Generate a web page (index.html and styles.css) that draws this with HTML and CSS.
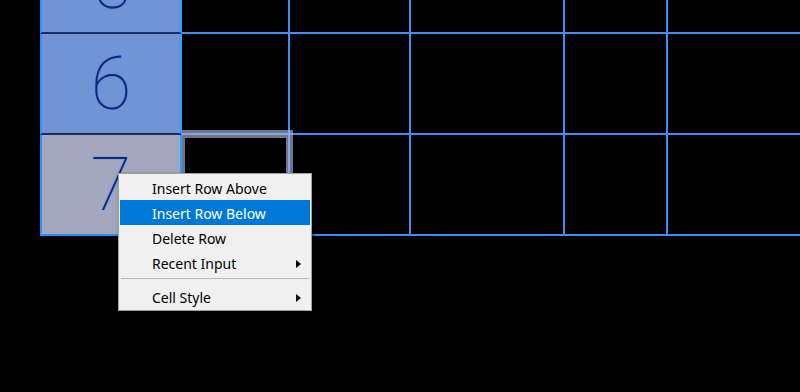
FILE: index.html
```html
<!DOCTYPE html>
<html lang="en">
<head>
    <meta charset="UTF-8">
    <meta name="viewport" content="width=device-width, initial-scale=1.0">
    <title>Row menu</title>
    <link rel="stylesheet" href="styles.css">
</head>
<body>
    <div class="sheet">
        <div class="head">5</div>
        <div class="cell"></div>
        <div class="cell"></div>
        <div class="cell"></div>
        <div class="cell"></div>
        <div class="cell last"></div>

        <div class="head">6</div>
        <div class="cell"></div>
        <div class="cell"></div>
        <div class="cell"></div>
        <div class="cell"></div>
        <div class="cell last"></div>

        <div class="head head-active">7</div>
        <div class="cell"></div>
        <div class="cell"></div>
        <div class="cell"></div>
        <div class="cell"></div>
        <div class="cell last"></div>
    </div>

    <!-- focus frame of the current cell -->
    <div class="focus"></div>

    <div class="menu">
        <div class="item">Insert Row Above</div>
        <div class="item selected">Insert Row Below</div>
        <div class="item">Delete Row</div>
        <div class="item">Recent Input <span class="arrow"></span></div>
        <div class="sep"></div>
        <div class="item">Cell Style <span class="arrow"></span></div>
    </div>
</body>
</html>
```

FILE: styles.css
```css
body {
    margin: 0;
    background: #000;
    height: 392px;
    overflow: hidden;
    position: relative;
}

.sheet {
    display: grid;
    grid-template-columns: 142px 108px 121px 154px 103px 1fr;
    grid-auto-rows: 101px;
    margin-left: 40px;
    margin-top: -67px;
}

.cell {
    border-right: 2px solid #3c90f6;
    border-bottom: 2px solid #3c90f6;
}

.cell.last {
    border-right: none;
}

.head {
    background: #7394d4;
    border-left: 2px solid #2994fb;
    border-right: 2px solid #2aa0ff;
    border-bottom: 2px solid #1b2c6a;
    text-align: center;
    font-family: Roboto, Lato, sans-serif;
    font-weight: 100;
    font-size: 74px;
    line-height: 74px;
    padding-top: 13px;
    color: #10286e;
    text-shadow: 0 0 2px #3f80ff;
}

.head-active {
    background: #a3a8be;
    border-bottom-color: #2a8cf5;
}

.focus {
    position: absolute;
    left: 182px;
    top: 130px;
    width: 111px;
    height: 110px;
    box-sizing: border-box;
    border-style: solid;
    border-color: rgba(170, 180, 215, 0.65);
    border-width: 8px 7px 7px 3px;
}

.menu {
    position: absolute;
    left: 118px;
    top: 173px;
    width: 194px;
    box-sizing: border-box;
    background: #f0f0f0;
    border: 1px solid #a0a0a0;
    padding: 1px;
    font-family: "Noto Sans", "Open Sans", sans-serif;
    font-size: 14px;
    color: #000;
    box-shadow: 2px 2px 4px rgba(0, 0, 0, 0.6);
}

.item {
    height: 25px;
    box-sizing: border-box;
    padding-top: 2px;
    display: flex;
    align-items: center;
    padding-left: 32px;
    padding-right: 9px;
}

.item.selected {
    background: #0078d7;
    color: #fff;
}

.arrow {
    margin-left: auto;
    width: 0;
    height: 0;
    border-left: 5px solid #000;
    border-top: 4.5px solid transparent;
    border-bottom: 4.5px solid transparent;
}

.sep {
    height: 1px;
    background: #b8b8b8;
    margin: 3px 1px 5px;
}
```
